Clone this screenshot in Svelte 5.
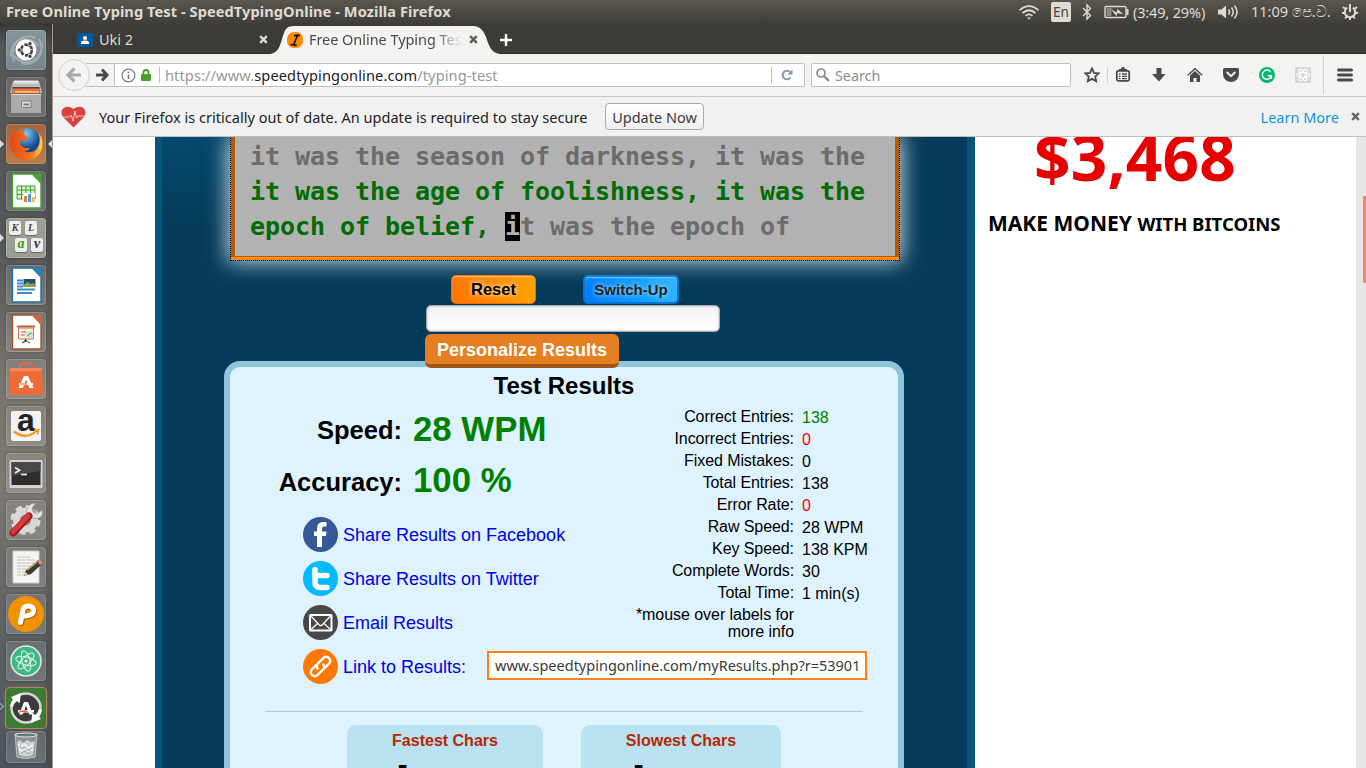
<script>
  const stats = [
    { label: 'Correct Entries:', value: '138', tone: 'good' },
    { label: 'Incorrect Entries:', value: '0', tone: 'bad' },
    { label: 'Fixed Mistakes:', value: '0', tone: '' },
    { label: 'Total Entries:', value: '138', tone: '' },
    { label: 'Error Rate:', value: '0', tone: 'bad' },
    { label: 'Raw Speed:', value: '28 WPM', tone: '' },
    { label: 'Key Speed:', value: '138 KPM', tone: '' },
    { label: 'Complete Words:', value: '30', tone: '' },
    { label: 'Total Time:', value: '1 min(s)', tone: '' }
  ];
</script>

{#snippet cross(color)}
  <svg class="cross" width="9" height="9" viewBox="0 0 9 9"><path d="M1.2 1.2 7.8 7.8M7.8 1.2 1.2 7.8" stroke={color} stroke-width="2.4" /></svg>
{/snippet}

{#snippet page(edge, fold)}
  <path d="M6.500 3h20l8.500 9v25h-28.500z" fill="#fff" stroke={edge} stroke-width="1.400" />
  <path d="M25 2.500h10.500v10.500z" fill={fold} />
{/snippet}

<div class="screen">
  <header class="panel">
    <span class="title">Free Online Typing Test - SpeedTypingOnline - Mozilla Firefox</span>
    <div class="tray">
      <svg class="wifi" width="22" height="18" viewBox="0 0 22 18" fill="none" stroke="#dfdbd2" stroke-width="1.700">
        <path d="M1.500 7.200Q11-1 20.500 7.200M4.500 10Q11 4.500 17.500 10M7.500 12.800Q11 10 14.500 12.800" /><path d="M9 14.500h4l-2 2.300z" fill="#dfdbd2" stroke="none" />
      </svg>
      <span class="lang">En</span>
      <svg class="bt" width="10" height="18" viewBox="0 0 10 18" fill="none" stroke="#dfdbd2" stroke-width="1.400"><path d="M1 5l7.500 7.500L5 16V2l3.500 3.500L1 13" /></svg>
      <svg class="battery" width="25" height="14" viewBox="0 0 25 14"><rect x="1" y="1.500" width="21" height="11" rx="1" fill="none" stroke="#dfdbd2" stroke-width="1.400" /><rect x="22.500" y="4" width="2" height="6" fill="#dfdbd2" /><rect x="2.500" y="3" width="5" height="8" fill="#8b8880" /><path d="M6.500 4l6 3.500 1-3.500 6 5.500-6-1.500-1 3z" fill="#dfdbd2" /></svg>
      <span class="charge">(3:49, 29%)</span>
      <svg class="volume" width="21" height="16" viewBox="0 0 21 16" fill="none" stroke="#dfdbd2" stroke-width="1.500"><path d="M0 5.500h3.500L8 1.500v13L3.500 10.500H0z" fill="#dfdbd2" stroke="none" /><path d="M10.500 5.500q2 2.500 0 5M13.500 3.500q3.500 4.500 0 9M16.500 1.500q5 6.500 0 13" /></svg>
      <span class="clock">11:09 පෙ.ව.</span>
      <svg class="cog" width="16" height="16" viewBox="0 0 16 16" fill="none" stroke="#dfdbd2"><path d="M5.200 3.700a5.200 5.200 0 1 0 5.600 0" stroke-width="2" /><path d="M8 0v8" stroke-width="2" /><path d="M1 3l2 1.500M15 3l-2 1.500M0 9h2.500M16 9h-2.500M3.200 14.500l1.300-2M12.800 14.500l-1.300-2M8 16v-2.500" stroke-width="2" /></svg>
    </div>
  </header>

  <div class="desktop">
    <nav class="launcher">
      <div class="tile dash"><svg viewBox="0 0 40 40"><g fill="none" stroke="#c3ccd1" stroke-opacity=".5" stroke-width="2"><path d="M8 32C2 14 16 2 30 8M33 9c8 14-4 29-18 24M5 26C5 8 22 4 33 16M36 14c0 18-18 24-28 12" /></g><circle cx="20" cy="20" r="10.500" fill="#fff" /><circle cx="20.500" cy="20" r="5.400" fill="none" stroke="#444" stroke-width="2.600" stroke-dasharray="9.800 1.500" /><g fill="#444" stroke="#fff" stroke-width=".7"><circle cx="13.300" cy="20" r="2.100" /><circle cx="24" cy="13.700" r="2.100" /><circle cx="24" cy="26.300" r="2.100" /></g></svg></div>
      <div class="tile"><svg viewBox="0 0 40 40"><path d="M7 4h26l3 12H4z" fill="#bbb" /><path d="M8 3.500h24v3H8z" fill="#e4e4e4" /><path d="M6.500 10h27v7h-27z" fill="#55423a" /><path d="M7 11.500h26l.5 5h-27z" fill="#ed7030" /><path d="M9 14h24v2H9z" fill="#ffb373" /><path d="M5 17h30v19H5z" fill="#aaa" /><path d="M5 17h30v1H5z" fill="#e0e0e0" /><rect x="15.500" y="24" width="9.500" height="6.500" rx="1" fill="#ddd" stroke="#777" /><path d="M17.500 26.500h5.500v2h-5.500z" fill="#777" /></svg></div>
      <div class="tile firefox"><svg viewBox="0 0 40 40"><defs><radialGradient id="globe" cx=".45" cy=".2"><stop offset="0" stop-color="#7bd1f0" /><stop offset="1" stop-color="#154a91" /></radialGradient><linearGradient id="fox"><stop offset="0" stop-color="#e4471a" /><stop offset=".7" stop-color="#f27b20" /><stop offset="1" stop-color="#ffe04a" /></linearGradient></defs><circle cx="21" cy="18.500" r="14.500" fill="url(#globe)" /><path d="M8 5c-3 6-5 11-3.500 18C6 31 13 36.500 20 36.500c10 0 17-8 16.500-18-.3-4-2-7.500-4-9.500 2 5 1.500 12-1.500 15.500-3 4-9 5-13 2.500 3 0 5-1 6-3-3 0-6 .5-8.500-2-2-2-1.500-4.500 0-5.500 1.500-.8 3 0 4 .3.3-2 2-2.800 3.500-3.800-3-.5-4-1-5-3.500C17 7.500 18 6 20 5c-4-.5-7 1.500-8.500 3.500C9.500 8 8.500 7 8 5z" fill="url(#fox)" /></svg><i class="run left"></i><i class="run right"></i></div>
      <div class="tile"><svg viewBox="0 0 40 40">{@render page('#43a02a', '#45a52d')}<path d="M11 15h18v13H11z" fill="#d8f0d0" stroke="#43a02a" /><path d="M11 19h18M11 23.500h18M15.500 15v13M20 15v13M24.500 15v13" stroke="#43a02a" /><path d="M17 22h12v9H17z" fill="#fff" /><path d="M18 25h3v6h-3z" fill="#e87b52" /><path d="M22 23h3v8h-3z" fill="#4a9edb" /><path d="M26 26h3v5h-3z" fill="#e5c05c" /></svg></div>
      <div class="tile keys"><span>K</span><span>L</span><span class="a">a</span><span class="v">v</span><i class="run left"></i></div>
      <div class="tile"><svg viewBox="0 0 40 40">{@render page('#1f6fa3', '#2a7fb8')}<path d="M11 15.500h6M11 18.500h6M11 21.500h6M11 24.500h18M11 28h15" stroke="#3b8ec4" stroke-width="1.800" /><path d="M17.500 14h12v8h-12z" fill="#264f78" /><path d="M17.500 20l4-3 3 2 2-1 3 2v2h-12z" fill="#8ba446" /></svg></div>
      <div class="tile"><svg viewBox="0 0 40 40">{@render page('#a85230', '#c56a42')}<path d="M11 14.500h18" stroke="#bd5f38" stroke-width="2" /><path d="M12.500 16h15v11h-15z" fill="#fbeee8" stroke="#c97755" /><path d="M15 20h5M15 23h4" stroke="#bd5f38" /><path d="M21 20h5v5h-5z" fill="#e7f3e2" stroke="#8b9" stroke-width=".5" /><path d="M21.500 24l2-2 2-1" stroke="#3e9c2c" /><path d="M20 27v2l-4 2M20 29l4 2" stroke="#444" /></svg></div>
      <div class="tile"><svg viewBox="0 0 40 40"><path d="M14 12V7q0-2.500 3-2.500h6q3 0 3 2.500v5" fill="none" stroke="#d9694c" stroke-width="2.500" /><path d="M4 9h32l1 27H3z" fill="#ee6a37" /><path d="M4 9h32v3H4z" fill="#f58659" /><path d="M12.500 29 18 17h4l5.500 12h-4.200l-3.300-8.500-3.300 8.500z" fill="#fff" /><path d="M13 25h14" stroke="#fff" stroke-width="2" /><path d="M14 25h7" stroke="#e85d2b" stroke-width="1" /></svg></div>
      <div class="tile amazon"><svg viewBox="0 0 40 40"><rect x="5" y="5" width="30" height="30" rx="2" fill="#f3f3f3" /><text x="20" y="25" text-anchor="middle">a</text><path d="M8 25.500q12 9 23-1" fill="none" stroke="#f5921e" stroke-width="2.200" /><path d="M28 24.500l4.500-.5-1 4.500" fill="none" stroke="#f5921e" stroke-width="1.600" /></svg></div>
      <div class="tile"><svg viewBox="0 0 40 40"><rect x="3.500" y="7" width="33" height="28" rx="1.500" fill="#d4d4d4" /><path d="M5.500 9h29v23h-29z" fill="#2d2d2d" /><path d="M5.500 9h29v9l-29 5z" fill="#484848" /><path d="M9 14.500l4.500 2.700L9 20" fill="none" stroke="#eee" stroke-width="1.700" /><path d="M15 21.500h6" stroke="#eee" stroke-width="1.700" /></svg></div>
      <div class="tile"><svg viewBox="0 0 40 40"><circle cx="19.500" cy="20" r="12.500" fill="none" stroke="#d8d8d8" stroke-width="5" stroke-dasharray="6 3.800" /><circle cx="19.500" cy="20" r="9" fill="none" stroke="#d8d8d8" stroke-width="7" /><path d="M21 19l8-9" stroke="#aaa" stroke-width="5" /><path d="M30 3l-4 5 1 4 4 2 5-4q2 6-3 8t-10-2-1-9q2-4 8-4z" fill="#e3e3e3" stroke="#888" stroke-width=".6" /><path d="M7 33 23 16" stroke="#a5161b" stroke-width="7" stroke-linecap="round" /><path d="M7 32 22 16" stroke="#e1393b" stroke-width="4.500" stroke-linecap="round" /></svg></div>
      <div class="tile"><svg viewBox="0 0 40 40"><path d="M7 4h26v32H7z" fill="#f4f4f4" stroke="#ccc" /><path d="M11 10h14M11 13h18M11 16h17M11 19h18M11 22h14M11 25h10M11 28h8" stroke="#bbb" stroke-dasharray="4 .7" /><path d="M18 29l2-6 12-10 4 4-11 10z" fill="#3a3a32" /><path d="M21 23 31 15" stroke="#d1bd55" stroke-width="1.500" /><path d="M31 14l2-1.500q3 1 3 4L34 18z" fill="#e58095" /><path d="M18 29l1.500-4 2.500 2.500z" fill="#e8cda6" /></svg></div>
      <div class="tile"><svg viewBox="0 0 40 40"><circle cx="20" cy="20" r="18" fill="#f39200" /><path d="M15.500 29.500 18 17q1-4.500 6-4 5.500 1 4.500 5.500-1 4-8 4.500" fill="none" stroke="#a56512" stroke-width="5" stroke-linecap="round" /><path d="M14.500 28.500 17 16q1-4.500 6-4 5.500 1 4.500 5.500-1 4-8 4.500" fill="none" stroke="#fff" stroke-width="5" stroke-linecap="round" /></svg></div>
      <div class="tile"><svg viewBox="0 0 40 40"><circle cx="20" cy="20" r="15" fill="#40b883" stroke="#dce9e2" stroke-width="1.600" /><g fill="none" stroke="#d6f4e6" stroke-width="1.100"><ellipse cx="20" cy="20" rx="10.500" ry="4" transform="rotate(15 20 20)" /><ellipse cx="20" cy="20" rx="10.500" ry="4" transform="rotate(75 20 20)" /><ellipse cx="20" cy="20" rx="10.500" ry="4" transform="rotate(135 20 20)" /></g><circle cx="20" cy="20" r="1.500" fill="#fff" /></svg></div>
      <div class="tile updater"><svg viewBox="0 0 40 40"><circle cx="20" cy="20" r="14.500" fill="#3b3b3b" stroke="#d6d6d6" stroke-width="2.500" /><path d="M5 9l10-4-1.500 10.500L11 13q-3 2-4 6l-3-1q1-4 3-6.500zM35 31l-10 4 1.500-10.500L29 27q3-2 4-6l3 1q-1 4-3 6.500z" fill="#fff" /><path d="M13 26.500 18 14h4l5 12.500h-3.700L20 17.500l-3.300 9z" fill="#fff" /><path d="M12 22h16v2.500H12z" fill="#fff" /><path d="M13.500 22.500h8v1.500h-8z" fill="#e85d2b" /></svg><i class="run open"></i></div>
      <div class="tile trash"><svg viewBox="0 0 40 32"><path d="M9 3h22l-2 23q-9 3-18 0z" fill="#fff" fill-opacity=".25" stroke="#d6d6d6" stroke-width=".8" /><ellipse cx="20" cy="4" rx="11" ry="2" fill="#6d7478" stroke="#e4e4e4" /><path d="M11 11l3-2 3 3 4-3 4 2 4-1-2 14q-7 3-14 0z" fill="#d0d0d0" /><path d="M12 13l3 3 3-3 4 4 5-3M13 18l3 2 3-3 4 4 4-3" stroke="#f4f4f4" stroke-width="1.600" fill="none" /><path d="M14 15l2 3 3-2 3 4 4-3M15 22l4-2 3 3 3-3" stroke="#a5a5a5" fill="none" /></svg></div>
    </nav>

    <div class="browser">
      <div class="tabs">
        <div class="tab">
          <svg width="16" height="14" viewBox="0 0 16 14"><path d="M0 0h16v14H0z" fill="#05579e" /><circle cx="8" cy="5" r="2.100" fill="#fff" /><path d="M4 11V9.500q0-2 4-2t4 2V11z" fill="#fff" /></svg>
          <span class="name">Uki 2</span>
          {@render cross('#dcdad5')}
        </div>
        <div class="tab active">
          <svg class="shape" width="230" height="28" viewBox="0 0 230 28"><path d="M0 28C9 27 10 19 13 10 15 3 17 0 24 0H203C210 0 213 4 216 11 219 20 221 27 230 28Z" fill="#f4f3f1" /></svg>
          <svg class="fav" width="16" height="16" viewBox="0 0 16 16"><rect width="16" height="16" rx="7" fill="#ff8a00" /><path d="M7 3.500q2 .5 3.500-.5 1 .8 2.500.3M3.500 13q2-1 3 0t3-.5M10.500 3.500 6.500 13" fill="none" stroke="#111" stroke-width="1.600" /></svg>
          <span class="name">Free Online Typing Tes</span>
          {@render cross('#5b5a57')}
        </div>
        <svg class="plus" width="12" height="12" viewBox="0 0 12 12"><path d="M6 0v12M0 6h12" stroke="#fff" stroke-width="2.400" /></svg>
      </div>

      <div class="toolbar">
        <div class="back"><svg width="16" height="16" viewBox="0 0 16 16"><path d="M8.500 1.500 2 8l6.500 6.500M2.500 8H15" fill="none" stroke="#aaa" stroke-width="3.200" /></svg></div>
        <div class="address">
          <span class="fwd"><svg width="13" height="14" viewBox="0 0 13 14"><path d="M6 1.500 11 7l-5 5.500M0 7h11" fill="none" stroke="#4a4a4a" stroke-width="3" /></svg></span>
          <svg class="info" width="15" height="15" viewBox="0 0 15 15"><circle cx="7.500" cy="7.500" r="6.400" fill="none" stroke="#7d7d7d" stroke-width="1.200" /><path d="M7.500 6.500V11M7.500 3.500v1.700" stroke="#7d7d7d" stroke-width="1.600" /></svg>
          <svg class="lock" width="10" height="12" viewBox="0 0 10 12"><path d="M2.500 6V3.500a2.500 2.500 0 0 1 5 0V6" fill="none" stroke="#4a9e29" stroke-width="1.800" /><rect y="5" width="10" height="7" rx="1" fill="#4a9e29" /></svg>
          <span class="bar"></span>
          <span class="url">https://www.<b>speedtypingonline.com</b>/typing-test</span>
          <span class="bar end"></span>
          <svg class="reload" width="12" height="12" viewBox="0 0 12 12"><path d="M9.500 8.500A4.300 4.300 0 1 1 9 3" fill="none" stroke="#8796a5" stroke-width="2" /><path d="M11.500.5v5h-5z" fill="#8796a5" /></svg>
        </div>
        <div class="search">
          <svg width="14" height="14" viewBox="0 0 14 14"><circle cx="5" cy="5" r="4" fill="none" stroke="#888" stroke-width="1.700" /><path d="M8 8l5 5" stroke="#888" stroke-width="2.400" /></svg>
          <span>Search</span>
        </div>
        <div class="actions">
          <svg class="star" width="16" height="16" viewBox="0 0 16 16"><path d="M8 1.500l2 4.300 4.700.5-3.500 3.200 1 4.700L8 11.900l-4.200 2.300 1-4.700L1.300 6.300 6 5.800z" fill="none" stroke="#4a4a4a" stroke-width="1.800" /></svg>
          <i class="sep"></i>
          <svg width="16" height="16" viewBox="0 0 16 16"><rect x="1.800" y="3.800" width="12.400" height="10" rx="1.500" fill="none" stroke="#4a4a4a" stroke-width="1.800" /><path d="M4 4V2h2a2 2 0 0 1 4 0h2v2z" fill="#4a4a4a" /><path d="M4 7h1.500M7 7h5M4 9.300h1.500M7 9.300h5M4 11.600h1.500M7 11.600h5" stroke="#4a4a4a" stroke-width="1.300" /></svg>
          <svg width="16" height="16" viewBox="0 0 16 16"><path d="M5.500 1h5v6h4L8 14.500 1 7h4.500z" fill="#4a4a4a" /></svg>
          <svg width="16" height="16" viewBox="0 0 16 16"><path d="M.8 8.200 8 1.800l7.200 6.400" fill="none" stroke="#4a4a4a" stroke-width="1.400" /><path d="M12 2v3M3 8.500 8 4l5 4.500V15H9.500v-4h-3v4H3z" fill="#4a4a4a" /></svg>
          <svg width="16" height="16" viewBox="0 0 16 16"><path d="M1.500 1h13q1.500 0 1.500 1.500V7A8 8 0 0 1 0 7V2.500Q0 1 1.500 1z" fill="#4a4a4a" /><path d="M4.200 5.500 8 9.200l3.800-3.700" fill="none" stroke="#f4f3f1" stroke-width="2" stroke-linecap="round" /></svg>
          <svg width="16" height="16" viewBox="0 0 16 16"><circle cx="8" cy="8" r="8" fill="#02b875" /><path d="M11.500 4.700A4.600 4.600 0 1 0 12.200 9.500M8.800 8.700h3.600v3" fill="none" stroke="#fff" stroke-width="1.400" /></svg>
          <svg width="16" height="16" viewBox="0 0 16 16"><path d="M0 0h16v16H0z" fill="#d7d7d7" /><g fill="none" stroke="#fff" stroke-width="1.100"><ellipse cx="8" cy="8" rx="6.300" ry="2.500" /><ellipse cx="8" cy="8" rx="6.300" ry="2.500" transform="rotate(60 8 8)" /><ellipse cx="8" cy="8" rx="6.300" ry="2.500" transform="rotate(120 8 8)" /></g></svg>
          <i class="sep tall"></i>
          <svg class="menu" width="16" height="14" viewBox="0 0 16 14"><path d="M1.500 2h13M1.500 7h13M1.500 12h13" stroke="#4a4a4a" stroke-width="3" stroke-linecap="round" /></svg>
        </div>
      </div>

      <div class="notice">
        <svg class="heart" width="25" height="22" viewBox="0 0 25 22"><path d="M12.500 21.500 2.500 11.500C-3 5 4-3.500 12.500 3 21-3.500 28 5 22.500 11.500z" fill="#d7413f" /><path d="M1 11h7.500l1.500-2 2 6 2-10 1.500 7 1.500-2h7" fill="none" stroke="#f0c5c5" stroke-width="1" /></svg>
        <span class="msg">Your Firefox is critically out of date. An update is required to stay secure</span>
        <button>Update Now</button>
        <span class="learn">Learn More</span>
        {@render cross('#666')}
      </div>

      <div class="viewport">
        <main class="site">
          <div class="typing"><span>it was the season of darkness, it was the</span><span class="done">it was the age of foolishness, it was the</span><span><em>{'epoch of belief, '}</em><mark>i</mark>t was the epoch of</span></div>
          <div class="controls">
            <button class="reset">Reset</button>
            <button class="switch">Switch-Up</button>
          </div>
          <div class="entry"></div>
          <button class="personal">Personalize Results</button>

          <section class="results">
            <h2>Test Results</h2>
            <div class="columns">
              <div class="main">
                <div class="score"><span>Speed:</span><strong>28 WPM</strong></div>
                <div class="score second"><span>Accuracy:</span><strong>100 %</strong></div>
                <div class="share">
                  <svg viewBox="0 0 35 35"><circle cx="17.500" cy="17.500" r="17.500" fill="#365899" /><path d="M14 30V19h-3v-4.500h3V12q0-7 6-7h3.500v4.500H21q-2 0-2 2v3h4.500L23 19h-4v11z" fill="#fff" /></svg>
                  <span>Share Results on Facebook</span>
                </div>
                <div class="share">
                  <svg viewBox="0 0 35 35"><circle cx="17.500" cy="17.500" r="17.500" fill="#00b9ff" /><path d="M12 8.500V21q0 5.500 5.500 5.500H24M12 14.500h12" fill="none" stroke="#fff" stroke-width="5.500" stroke-linecap="round" /></svg>
                  <span>Share Results on Twitter</span>
                </div>
                <div class="share">
                  <svg viewBox="0 0 35 35"><circle cx="17.500" cy="17.500" r="17.500" fill="#484848" /><g fill="none" stroke="#fff" stroke-width="1.600"><rect x="7" y="10" width="21.500" height="15.500" rx=".5" stroke-width="2" /><path d="M7.500 10.500 16.300 20q1.400 1.300 2.800 0l8.900-9.500M7.500 25l7.500-7M28 25l-7.500-7" stroke-width="1.200" /></g></svg>
                  <span>Email Results</span>
                </div>
                <div class="share">
                  <svg viewBox="0 0 35 35"><circle cx="17.500" cy="17.500" r="17.500" fill="#ff7900" /><g fill="none" stroke="#fff" stroke-width="2.500" transform="rotate(-45 17.500 17.500)"><path d="M19 21.500h6.500a4 4 0 0 0 0-8H18a4 4 0 0 0-4 4.500M16 13.500H9.500a4 4 0 0 0 0 8H17a4 4 0 0 0 4-4.500" /></g></svg>
                  <span>Link to Results:</span>
                </div>
              </div>
              <div class="side">
                <dl>
                  {#each stats as s}
                    <dt>{s.label}</dt><dd class={s.tone}>{s.value}</dd>
                  {/each}
                </dl>
                <p>*mouse over labels for<br />more info</p>
                <div class="link"><span>www.speedtypingonline.com/myResults.php?r=539016</span></div>
              </div>
            </div>
            <hr />
            <div class="chars">
              <div class="fast"><h3>Fastest Chars</h3><b>l</b></div>
              <div class="slow"><h3>Slowest Chars</h3><b>l</b></div>
            </div>
          </section>
        </main>
        <aside>
          <div class="amount">$3,468</div>
          <div class="slogan"><span>MAKE MONEY</span> <small>WITH BITCOINS</small></div>
        </aside>
        <div class="scroll"><i></i></div>
      </div>
    </div>
  </div>
</div>

<style>
  :global(body) { margin: 0; overflow: hidden; }
  * { box-sizing: border-box; }
  svg { display: block; flex: none; }
  .screen { width: 1366px; height: 768px; overflow: hidden; display: flex; flex-direction: column; font-family: "Noto Sans", sans-serif; font-size: 14px; color: #333; }
  .panel { height: 24px; flex: none; display: flex; align-items: center; justify-content: space-between; padding: 0 8px 0 6px; background: linear-gradient(#5a574e, #3e3d39); color: #dfdbd2; white-space: nowrap; }
  .title { font-weight: 700; font-size: 14.600px; line-height: 20px; letter-spacing: .07px; padding-bottom: 2px; }
  .tray { display: flex; align-items: center; }
  .lang { margin-left: 11px; width: 20px; height: 20px; border-radius: 2px; background: #dfdbd2; color: #46443f; font-size: 13.500px; line-height: 20px; text-align: center; }
  .bt { margin-left: 11px; }
  .battery { margin-left: 12px; }
  .charge { margin-left: 4px; width: 74px; font-size: 14.500px; line-height: 20px; letter-spacing: -.15px; padding-bottom: 1px; }
  .volume { margin-left: 11px; }
  .clock { margin-left: 12px; width: 79px; font-size: 14.500px; line-height: 20px; padding-bottom: 2px; }
  .cog { margin-left: 12px; }

  .desktop { flex: 1; min-height: 0; display: flex; }
  .launcher { width: 53px; flex: none; padding: 6px 0 0 6px; display: flex; flex-direction: column; gap: 7px; border-right: 1px solid #a9998f; background: linear-gradient(#3c3c3b, #565757 3%, #555858 30%, #78756e 48%, #7d7973 62%, #5d6062 82%, #4e565c); box-shadow: inset -5px 0 5px #0002; }
  .tile { position: relative; width: 40px; height: 40px; flex: none; border-radius: 4px; background: linear-gradient(#ffffff18, #ffffff28); box-shadow: inset 0 0 0 1px #ffffff2c, 0 0 3px #0005; }
  .tile svg { width: 40px; height: 40px; }
  .dash { background: linear-gradient(#87939a, #77858c); overflow: hidden; }
  .firefox { background: linear-gradient(#a3663f, #bf7b4c); }
  .keys { background: #9b9f93; display: grid; grid-template-columns: 12px 12px; grid-template-rows: 14px 14px; gap: 3px 4px; padding: 3px 0 0 3px; font: italic 700 10px/13px "Liberation Serif", serif; }
  .keys span { width: 12px; height: 14px; background: #eee; border-radius: 2px; text-align: center; color: #444; box-shadow: 0 1px 1px #666; }
  .keys .a, .keys .v { transform: translateX(6px); font-size: 14px; line-height: 11px; color: #333; }
  .keys .a { color: #3d9b12; }
  .amazon text { font: 700 32px "Liberation Sans", sans-serif; fill: #222; }
  .updater { background: #3d7a32; box-shadow: 0 0 0 1px #b9825c, 0 0 3px #b9825c; }
  .trash { height: 32px; margin-top: -4px; }
  .trash svg { height: 32px; }
  .run { position: absolute; top: 16px; border: 4px solid transparent; }
  .run.left { left: -6px; border-left-color: #ddd; border-right: 0; }
  .run.right { right: -6px; border-right-color: #ddd; border-left: 0; }
  .run.open { left: -8px; width: 5px; height: 5px; border: solid #8cb8d0; border-width: 1px 1px 0 0; transform: rotate(45deg); }

  .browser { flex: 1; min-width: 0; display: flex; flex-direction: column; }
  .tabs { height: 30px; flex: none; background: #3c3b37; display: flex; align-items: center; color: #dcdad5; padding-top: 2px; border-bottom: 1px solid #2c2b28; }
  .tab { width: 221px; height: 28px; padding: 0 6px 0 24px; display: flex; align-items: center; gap: 6px; font-size: 14.500px; white-space: nowrap; }
  .tab .name { flex: 1; overflow: hidden; line-height: 20px; padding-bottom: 2px; }
  .active { position: relative; width: 225px; padding: 0 22px 0 13px; color: #4a4947; }
  .active .name { flex: none; width: 154px; letter-spacing: -.05px; mask-image: linear-gradient(90deg, #000 80%, transparent 100%); }
  .shape { position: absolute; left: -4px; top: 0; }
  .active > :not(.shape) { position: relative; }
  .plus { margin-left: 1px; }

  .toolbar { height: 43px; flex: none; background: #f4f3f1; border-bottom: 1px solid #c8c7c4; display: flex; align-items: center; padding-left: 5px; }
  .back { width: 32px; height: 32px; border: 1px solid #d3d2d0; border-radius: 50%; background: #f4f3f1; display: grid; place-items: center; z-index: 1; flex: none; }
  .address { width: 720px; height: 24px; flex: none; margin-left: -5px; border: 1px solid #c1c0be; border-radius: 2px; background: #fff; display: flex; align-items: center; }
  .fwd { width: 29px; height: 22px; background: #f4f3f1; border-right: 1px solid #c1c0be; padding: 4px 0 0 10px; }
  .info { margin-left: 6px; }
  .lock { margin-left: 5px; }
  .bar { width: 1px; height: 16px; background: #c1c0be; margin-left: 8px; }
  .url { margin-left: 5px; color: #999; font-size: 14.600px; letter-spacing: .1px; }
  .url b { font-weight: 400; color: #222; }
  .bar.end { margin-left: auto; }
  .reload { margin: 0 11px 0 9px; }
  .search { width: 260px; height: 24px; margin-left: 6px; border: 1px solid #c1c0be; border-radius: 2px; background: #fff; display: flex; align-items: center; gap: 5px; padding-left: 4px; color: #8d8d8d; font-size: 14.300px; }
  .actions { display: flex; align-items: center; gap: 20px; margin-left: 13px; }
  .sep { width: 1px; height: 16px; background: #d2d1cf; margin: 0 -13px 0 -13px; }
  .sep.tall { height: 38px; margin: 0 -7px 0 -8px; }

  .notice { height: 40px; flex: none; background: #f1f1f1; border-bottom: 1px solid #bfbfbd; display: flex; align-items: center; padding: 0 6px 0 8px; white-space: nowrap; }
  .msg { margin-left: 13px; width: 488px; font-size: 14.500px; letter-spacing: .03px; color: #222; }
  .notice button { margin-left: 18px; width: 99px; height: 27px; border: 1px solid #aaa; border-radius: 4px; background: linear-gradient(#fff, #eee); font: 14.500px "Noto Sans", sans-serif; color: #3c3c3c; padding: 0; }
  .learn { margin-left: auto; margin-right: 12px; color: #0996dc; font-size: 14.500px; }

  .viewport { flex: 1; min-height: 0; display: flex; background: #fff; overflow: hidden; font-family: "Liberation Sans", sans-serif; color: #000; }
  .site { width: 820px; flex: none; margin-left: 102px; padding: 0 62px 0 62px; border-left: 7px solid #04567a; border-right: 8px solid #04567a; background: radial-gradient(ellipse 300px 90px at 0 0, #04486f, #043b5a); display: flex; flex-direction: column; align-items: flex-start; }
  .typing { width: 668px; height: 120px; flex: none; margin-left: 7px; padding: 2px 0 0 15px; border: solid #b35a00; border-width: 0 4px 1px; background: #b2b2b2; box-shadow: 0 3px 0 #ff8a14, 0 2px 20px 3px #c9dae6; font: 700 25px/35px "DejaVu Sans Mono", monospace; letter-spacing: -.05px; color: #6b6b6b; white-space: pre; position: relative; }
  .typing::after { content: ''; position: absolute; inset: -1px -5px -5px; border: 1px dotted #000; }
  .typing > span { display: block; }
  .typing .done, .typing em { color: #006b00; font-style: normal; }
  .typing mark { background: #000; color: #b2b2b2; }
  .controls { display: flex; gap: 47px; margin: 18px 0 0 227px; }
  .controls button { height: 29px; border-radius: 5px; padding: 0; font-family: inherit; font-weight: 700; }
  .reset { width: 85px; border: 1.500px solid #f56a00; background: linear-gradient(90deg, #ff7600, #ffa200); font-size: 16.500px; box-shadow: inset 0 1px 1px #ffbf70; text-shadow: 0 0 5px #fff; }
  .switch { width: 96px; border: 2px solid #0873d0; background: linear-gradient(75deg, #007dff, #12a0ff 60%, #35b5ff); font-size: 15px; color: #222; box-shadow: inset 0 1px 1px #65c9ff; text-shadow: 0 0 5px #bfe8ff; }
  .entry { width: 294px; height: 27px; flex: none; margin: 1px 0 0 202px; border: 1px solid #aaa; border-radius: 5px; background: linear-gradient(#f2f2f2, #fff); box-shadow: inset 0 0 2px #999; }
  .personal { width: 194px; height: 34px; flex: none; margin: 2px 0 0 201px; padding: 2px 0 0; border: 0; border-bottom: 4px solid #a0561a; border-radius: 6px; background: #e67e22; color: #fff; font: 700 18px "Liberation Sans", sans-serif; position: relative; z-index: 1; }
  .results { width: 680px; height: 460px; flex: none; margin-top: -7px; border: 6px solid #8ec6d9; border-radius: 16px; background: #dff3ff; }
  h2 { margin: 5px 0 0; font-size: 24px; line-height: 28px; text-align: center; }
  .columns { display: flex; height: 311px; }
  .main { width: 345px; }
  .score { display: flex; align-items: center; gap: 11px; height: 52px; margin-top: 3px; }
  .score span { width: 172px; text-align: right; font-weight: 700; font-size: 25.500px; padding-top: 3px; }
  .score strong { font-size: 34.800px; padding-bottom: 1px; color: #008000; }
  .score.second { margin-top: 0; height: 51px; }
  .share { display: flex; align-items: center; gap: 5px; height: 35px; margin: 11px 0 9px 73px; font-size: 18px; color: #0000e6; white-space: nowrap; }
  .share span { padding-top: 2px; }
  .share + .share { margin-top: 0; }
  .share svg { width: 35px; height: 35px; }
  .side { width: 323px; }
  dl { margin: 7px 0 0 50px; display: grid; grid-template-columns: 169px 1fr; column-gap: 8px; grid-auto-rows: 22px; font-size: 16px; line-height: 20px; white-space: nowrap; }
  dt { text-align: right; letter-spacing: -.08px; }
  dd { margin: 1px 0 0; }
  .good { color: #008000; }
  .bad { color: #f00; }
  p { margin: 1px 104px 0 0; font-size: 16px; line-height: 17px; text-align: right; letter-spacing: -.05px; }
  .link { width: 380px; height: 29px; margin: 11px 0 0 -88px; border: 2px solid #ff7f19; background: #fff; padding: 0 6px; font: 14.500px/25px "Noto Sans", sans-serif; color: #3b3b3b; }
  .link span { display: block; overflow: hidden; white-space: nowrap; }
  hr { margin: 0 35px; border: 0; border-top: 1px solid #b9c3c9; }
  .chars { display: flex; gap: 38px; margin: 13px 0 0 117px; }
  .chars div { height: 80px; border-radius: 9px; background: #b9e1f0; text-align: center; }
  .fast { width: 196px; }
  .slow { width: 200px; }
  h3 { margin: 6px 0 0; font-size: 16px; line-height: 20px; color: #b32800; }
  .chars b { display: block; margin: 8px 79px 0 0; font: 700 26px/34px "DejaVu Sans Mono", monospace; }
  aside { flex: 1; padding-left: 13px; font-family: "Noto Sans", sans-serif; white-space: nowrap; }
  .amount { margin: -24px 0 0 46px; font-size: 64px; line-height: 88px; font-weight: 700; color: #e60000; letter-spacing: .1px; }
  .slogan { margin-top: 6px; font-size: 21px; font-weight: 700; line-height: 32px; }
  .slogan small { font-size: 18.500px; }
  .scroll { width: 10px; background: #e6e6e6; padding: 59px 0 0 7px; }
  .scroll i { display: block; height: 87px; background: #f08763; }
</style>
